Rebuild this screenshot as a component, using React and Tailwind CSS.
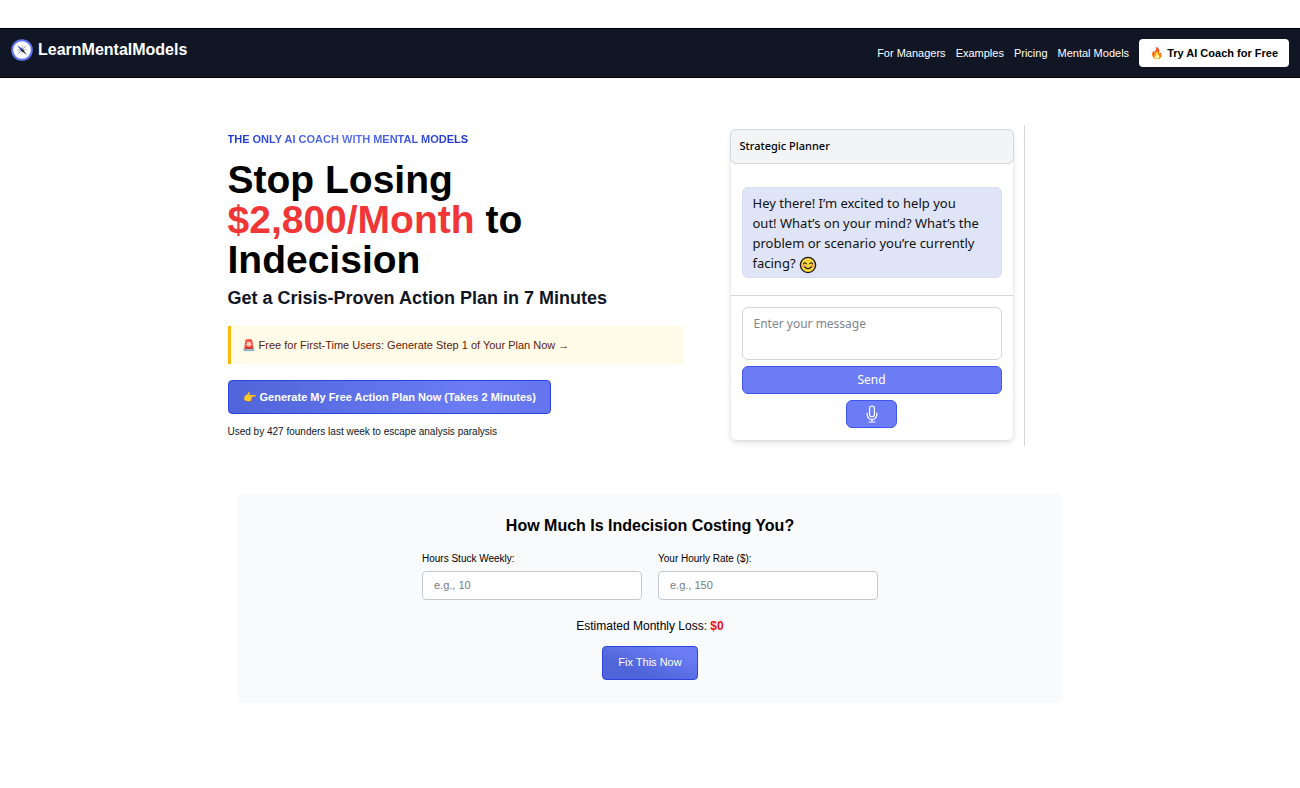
import React, { useState } from 'react';

const navLinks = ['For Managers', 'Examples', 'Pricing', 'Mental Models'];

function CompassLogo() {
  return (
    <svg viewBox="0 0 24 24" className="w-6 h-6" aria-hidden="true">
      <circle cx="12" cy="12" r="9.8" fill="#fff" stroke="#6577f0" strokeWidth="2" />
      <path d="M12 6l.8 5 5.2 1-5.200 1-.8 5-.8-5-5.200-1 5.200-1z" fill="#b4b8c0" />
      <path d="M15.500 8.500l-3 2.500M8.500 15.500l2.500-3" stroke="#8b8f98" strokeWidth="1" />
      <path d="M7 7l5.500 4-1.500 1.500z" fill="#2438b8" />
      <path d="M17 17l-6-4.500 1.500-1.500z" fill="#0b1020" />
    </svg>
  );
}

function SmileIcon() {
  return (
    <svg viewBox="0 0 18 18" className="inline-block w-[18px] h-[18px] align-middle" role="img" aria-label="smile">
      <circle cx="9" cy="9" r="7.600" fill="#fcd53f" stroke="#1b1b1b" strokeWidth="1.400" />
      <circle cx="4.600" cy="10" r="1.500" fill="#f79a6b" />
      <circle cx="13.400" cy="10" r="1.500" fill="#f79a6b" />
      <path d="M4.500 7.800q1.400-2 2.800 0M10.700 7.800q1.400-2 2.800 0M5.600 11q3.400 3.200 6.800 0" fill="none" stroke="#1b1b1b" strokeWidth="1.100" strokeLinecap="round" />
    </svg>
  );
}

function MicIcon() {
  return (
    <svg viewBox="0 0 12 18" className="w-3 h-[18px]" fill="none" stroke="#fff" strokeWidth="1.200" strokeLinecap="round" aria-hidden="true">
      <rect x="3.600" y="1" width="4.800" height="11" rx="2.400" />
      <path d="M1.200 8v1.800a4.800 4.800 0 0 0 9.600 0V8M6 14.600V17M3 17h6" />
    </svg>
  );
}

function Header() {
  return (
    <header className="mt-7 flex h-[50px] items-center justify-between border-y border-black bg-[#111625] px-[11px]">
      <a href="#home" className="-ml-px mb-[6px] flex items-center gap-1 text-base font-bold text-white">
        <CompassLogo />
        LearnMentalModels
      </a>
      <nav className="flex items-center gap-[10px] text-[11px] text-white">
        {navLinks.map((link) => (
          <a key={link} href="#nav">{link}</a>
        ))}
        <button type="button" className="h-7 rounded bg-white px-[11px] font-bold text-black">
          🔥 Try AI Coach for Free
        </button>
      </nav>
    </header>
  );
}

function ChatCard() {
  return (
    <div className="border-r border-[#d4d6da] pt-1 pb-[6px] pr-[10px] font-['Noto_Sans',sans-serif]">
      <div className="rounded-md border-x border-[#f0f0f2] bg-white pb-3 shadow-md">
        <h3 className="-mx-px flex h-[35px] items-center rounded-md border border-[#d3d7de] bg-[#f3f4f6] px-[9px] text-[11px] font-medium text-black">
          Strategic Planner
        </h3>
        <p className="mx-[11px] mt-[23px] rounded-md border border-[#d8def5] bg-[#dfe5f7] px-[10px] pt-[5px] pb-[3px] text-[13px] leading-5 text-[#111]">
          Hey there! I’m excited to help you<br />
          out! What’s on your mind? What’s the problem or scenario you’re currently facing? <SmileIcon />
        </p>
        <div className="mt-[17px] flex flex-col items-center gap-[6px] border-t border-[#d5d7db] px-[11px] pt-[11px]">
          <textarea
            aria-label="Message"
            placeholder="Enter your message"
            className="block h-[53px] w-full resize-none rounded-md border border-[#d3d6dc] px-[11px] py-[6px] text-xs leading-5 placeholder:text-[#80858f]"
          />
          <button type="button" className="h-[28px] w-full rounded-md border border-[#4053ea] bg-[#6b7cf5] text-xs text-white">
            Send
          </button>
          <button type="button" aria-label="Record" className="flex h-[28px] w-[51px] items-center justify-center rounded-md border border-[#4053ea] bg-[#6b7cf5]">
            <MicIcon />
          </button>
        </div>
      </div>
    </div>
  );
}

function Hero() {
  return (
    <section className="mx-auto mt-[47px] flex max-w-[845px] items-start gap-[46px]">
      <div className="w-[456px] pt-[6px]">
        <p className="w-fit bg-gradient-to-r from-[#1c35d8] via-[#5c72f2] to-[#1c2fc8] bg-clip-text text-[11px] leading-4 font-bold text-transparent uppercase">
          The only AI coach with mental models
        </p>
        <h1 className="mt-[13px] text-[39px] leading-10 font-bold text-black">
          Stop Losing <br />
          <span className="text-[#f13638]">$2,800/Month</span> to Indecision
        </h1>
        <h2 className="mt-1 text-lg leading-7 font-bold text-[#111625]">
          Get a Crisis-Proven Action Plan in 7 Minutes
        </h2>
        <div className="mt-[14px] flex h-[38px] items-center border-l-3 border-[#f9b90b] bg-[#fefce8] px-[11px] text-[11px] text-[#5e210b]">
          🚨 Free for First-Time Users: Generate Step 1 of Your Plan Now →
        </div>
        <button
          type="button"
          className="mt-4 h-[34px] rounded border border-[#2c43dc] bg-gradient-to-r from-[#5065da] via-[#6b7cf5] via-75% to-[#6475ee] px-[14px] text-[11px] font-bold text-white"
        >
          👉 Generate My Free Action Plan Now (Takes 2 Minutes)
        </button>
        <p className="mt-[10px] text-[10px] leading-4 text-[#111625]">
          Used by 427 founders last week to escape analysis paralysis
        </p>
      </div>
      <div className="w-[295px]">
        <ChatCard />
      </div>
    </section>
  );
}

function CostField({ id, label, placeholder, value, onChange }) {
  return (
    <div className="flex-1">
      <label htmlFor={id} className="block text-[10px] leading-4">{label}</label>
      <input
        id={id}
        type="text"
        value={value}
        onChange={(e) => onChange(e.target.value)}
        placeholder={placeholder}
        className="mt-1 block h-[29px] w-full rounded border border-[#c3c9d1] bg-white px-[11px] text-[11px] placeholder:text-[#757c88]"
      />
    </div>
  );
}

function CostCalculator() {
  const [hours, setHours] = useState('');
  const [rate, setRate] = useState('');
  const loss = (Number(hours) || 0) * (Number(rate) || 0) * 4;

  return (
    <section className="mx-auto mt-[47px] flex max-w-[824px] flex-col items-center rounded-md bg-[#f9fafc] pt-[21px] pb-[23px] text-black">
      <h2 className="text-base leading-6 font-bold">How Much Is Indecision Costing You?</h2>
      <div className="mt-[13px] flex w-[456px] gap-4">
        <CostField id="hours" label="Hours Stuck Weekly:" placeholder="e.g., 10" value={hours} onChange={setHours} />
        <CostField id="rate" label="Your Hourly Rate ($):" placeholder="e.g., 150" value={rate} onChange={setRate} />
      </div>
      <p className="mt-4 text-xs leading-5">
        Estimated Monthly Loss: <span className="font-bold text-[#ee0f12]">${loss}</span>
      </p>
      <button
        type="button"
        className="mt-[10px] h-[34px] rounded border border-[#2c43dc] bg-gradient-to-tr from-[#5065da] from-30% to-[#6b7cf5] to-80% px-[15px] text-[11px] text-white"
      >
        Fix This Now
      </button>
    </section>
  );
}

function App() {
  return (
    <div className="flow-root min-h-screen bg-white pb-10 font-['Liberation_Sans',sans-serif]">
      <Header />
      <Hero />
      <CostCalculator />
    </div>
  );
}

export default App;
